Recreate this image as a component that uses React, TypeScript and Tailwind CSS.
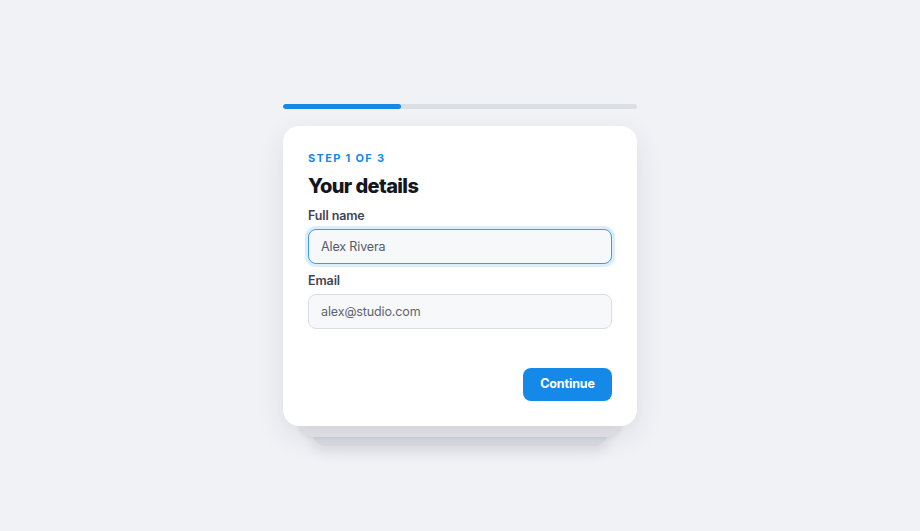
import { useState } from 'react';

export default function App() {
  const [name, setName] = useState('Alex Rivera');
  const [email, setEmail] = useState('');
  const step = 1;
  const total = 3;

  return (
    <div
      className="min-h-[531px] w-full bg-[#f1f2f6] flex flex-col items-center pt-[104px]"
      style={{ fontFamily: 'Inter, "Noto Sans", sans-serif' }}
    >
      <div className="w-[354px]">
        {/* progress */}
        <div className="h-[5px] w-full rounded-full bg-[#dcdee6] overflow-hidden">
          <div className="h-full rounded-full bg-[#1688e8]" style={{ width: `${(step / total) * 100}%` }} />
        </div>

        {/* card stack */}
        <div className="relative mt-[17px]">
          <div className="absolute left-[28px] right-[28px] top-[20px] bottom-[-20px] rounded-2xl bg-[#d9dbe2] shadow-[0_6px_14px_rgba(30,35,60,0.10)]" />
          <div className="absolute left-[14px] right-[14px] top-[12px] bottom-[-11px] rounded-2xl bg-[#e6e7ec] shadow-[0_1px_3px_rgba(30,35,60,0.06)]" />
          <div className="relative rounded-2xl bg-white px-[25px] pt-6 pb-[25px] shadow-[0_10px_28px_rgba(30,35,60,0.10)]">
            <p className="text-[11px] leading-4 font-bold tracking-[0.12em] text-[#1688e8]">STEP 1 OF 3</p>
            <h1 className="mt-[6px] text-[20px] leading-7 font-extrabold tracking-[-0.03em] text-[#14161f]">Your details</h1>

            <label className="mt-[6px] block text-[12.5px] leading-5 font-semibold tracking-[-0.01em] text-[#3f4454]">Full name</label>
            <input
              value={name}
              onChange={(e) => setName(e.target.value)}
              className="mt-[3px] block w-full h-[35px] rounded-lg border border-[#3b9cf0] bg-[#f7f8fa] px-3 text-[12.5px] tracking-[-0.01em] text-[#555a66] outline-none shadow-[0_0_0_3px_rgba(22,136,232,0.15)]"
            />

            <label className="mt-[7px] block text-[12.5px] leading-5 font-semibold tracking-[-0.01em] text-[#3f4454]">Email</label>
            <input
              value={email}
              onChange={(e) => setEmail(e.target.value)}
              placeholder="alex@studio.com"
              className="mt-[3px] block w-full h-[35px] rounded-lg border border-[#d9dce4] bg-[#f7f8fa] px-3 text-[12.5px] tracking-[-0.01em] text-[#555a66] placeholder:text-[#5f6470] outline-none"
            />

            <div className="mt-[39px] flex justify-end">
              <button className="h-[33px] w-[89px] rounded-lg bg-[#1589e8] text-[12.5px] font-bold tracking-[-0.01em] text-white">
                Continue
              </button>
            </div>
          </div>
        </div>
      </div>
    </div>
  );
}
